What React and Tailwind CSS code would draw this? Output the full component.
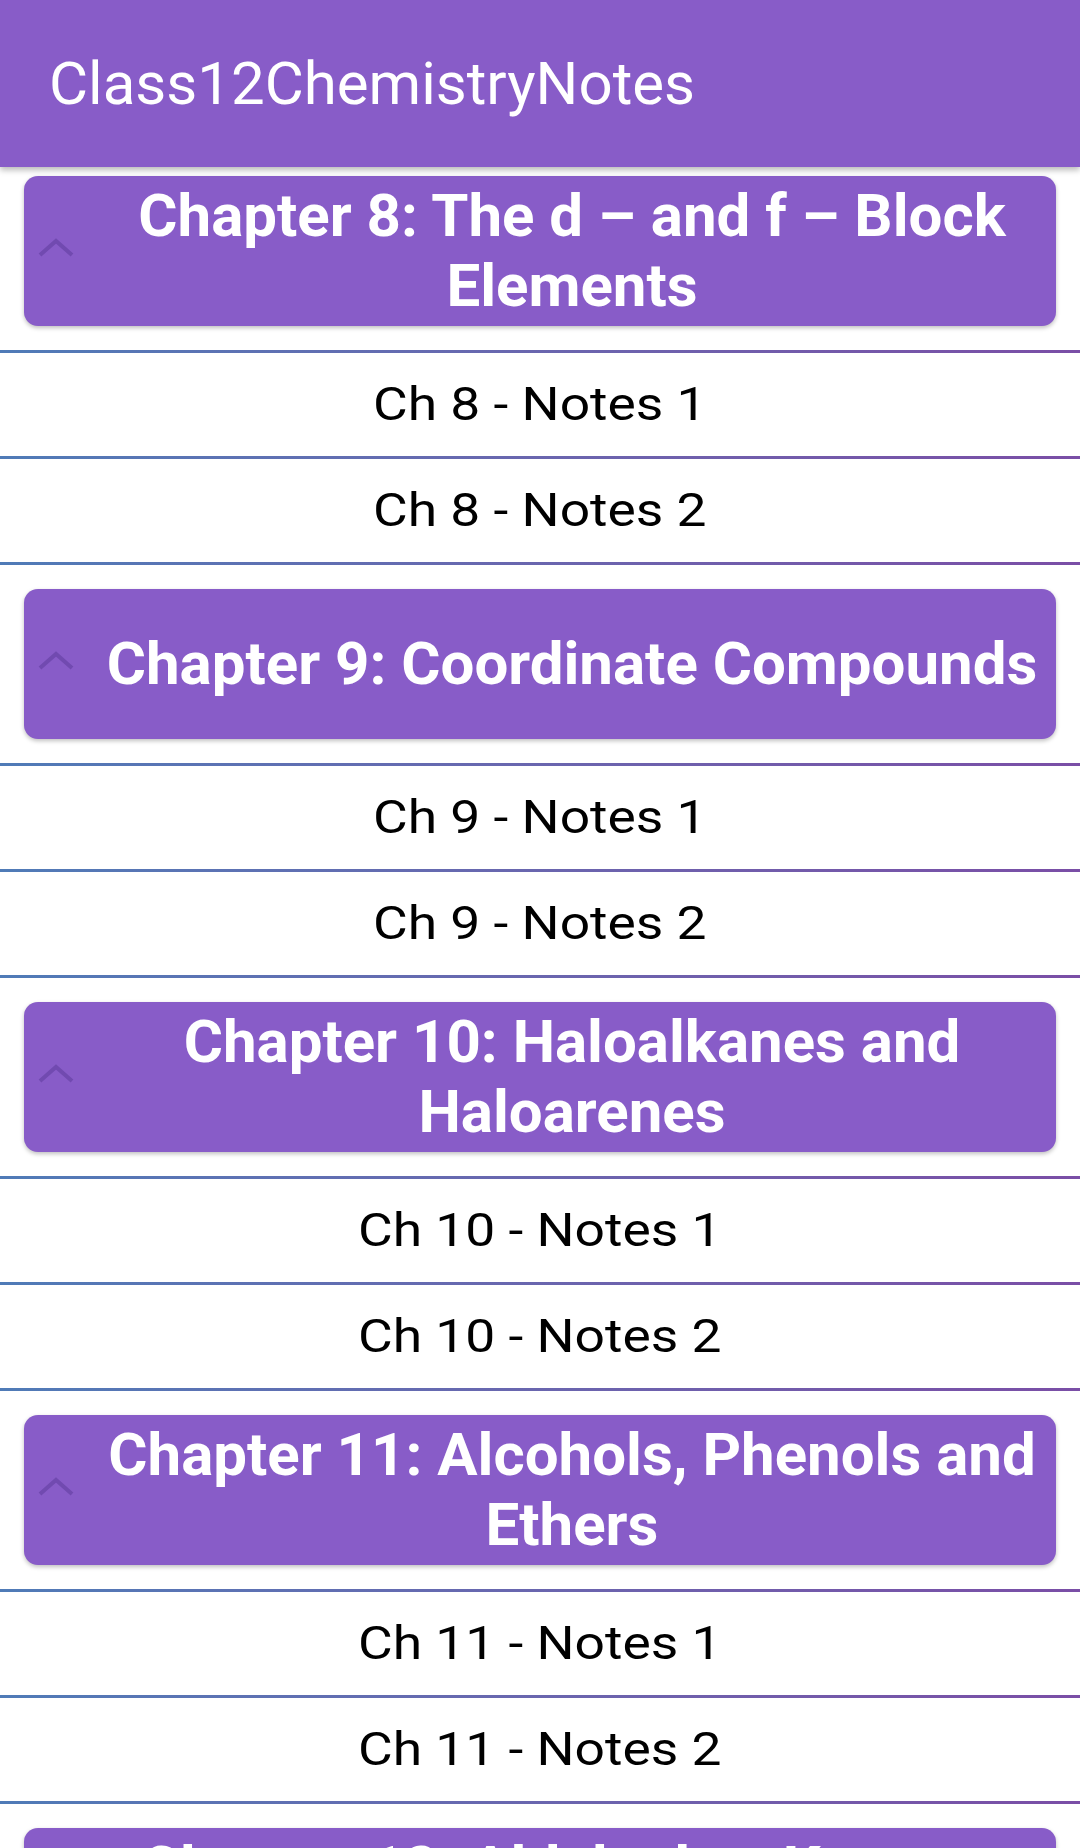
import React from "react";

const sections = [
  { title: "Chapter 8: The d – and f – Block Elements", n: 8 },
  { title: "Chapter 9: Coordinate Compounds", n: 9 },
  { title: "Chapter 10: Haloalkanes and Haloarenes", n: 10 },
  { title: "Chapter 11: Alcohols, Phenols and Ethers", n: 11 },
  { title: "Chapter 12: Aldehydes, Ketones and Carboxylic Acids", n: 12 },
];

function Chevron() {
  return (
    <svg width="36" height="20" viewBox="0 0 36 20" fill="none">
      <polyline
        points="2,17 18,3 34,17"
        stroke="#6a44a8"
        strokeOpacity="0.75"
        strokeWidth="4"
        strokeLinecap="butt"
        strokeLinejoin="miter"
      />
    </svg>
  );
}

function Line() {
  return <div className="h-[3px] bg-gradient-to-r from-[#4f7bb7] to-[#7a4ea6]" />;
}

function Item({ children }) {
  return (
    <div className="flex h-[103px] items-center justify-center text-[46px] text-black">
      <span className="inline-block scale-x-[1.16] whitespace-nowrap">{children}</span>
    </div>
  );
}

function Section({ title, n }) {
  return (
    <div>
      <div className="px-[24px] py-[24px]">
        <div className="flex h-[150px] items-center rounded-[14px] bg-[#885cc8] shadow-[0_2px_4px_rgba(0,0,0,0.25)]">
          <div className="flex w-[64px] shrink-0 justify-center pb-[6px]">
            <Chevron />
          </div>
          <div className="flex-1 px-[6px] text-center text-[60px] font-bold leading-[70px] text-white">
            {title}
          </div>
        </div>
      </div>
      <Line />
      <Item>Ch {n} - Notes 1</Item>
      <Line />
      <Item>Ch {n} - Notes 2</Item>
      <Line />
    </div>
  );
}

export default function App() {
  return (
    <div className="h-[1848px] w-[1080px] overflow-hidden bg-white font-['Roboto',sans-serif]">
      <header className="relative z-10 flex h-[167px] items-center bg-[#885cc8] pl-[49px] shadow-[0_3px_6px_rgba(0,0,0,0.28)]">
        <h1 className="text-[60px] font-normal leading-none text-white">Class12ChemistryNotes</h1>
      </header>
      <div className="-mt-[15px]">
        {sections.map((s) => (
          <Section key={s.n} title={s.title} n={s.n} />
        ))}
      </div>
    </div>
  );
}
